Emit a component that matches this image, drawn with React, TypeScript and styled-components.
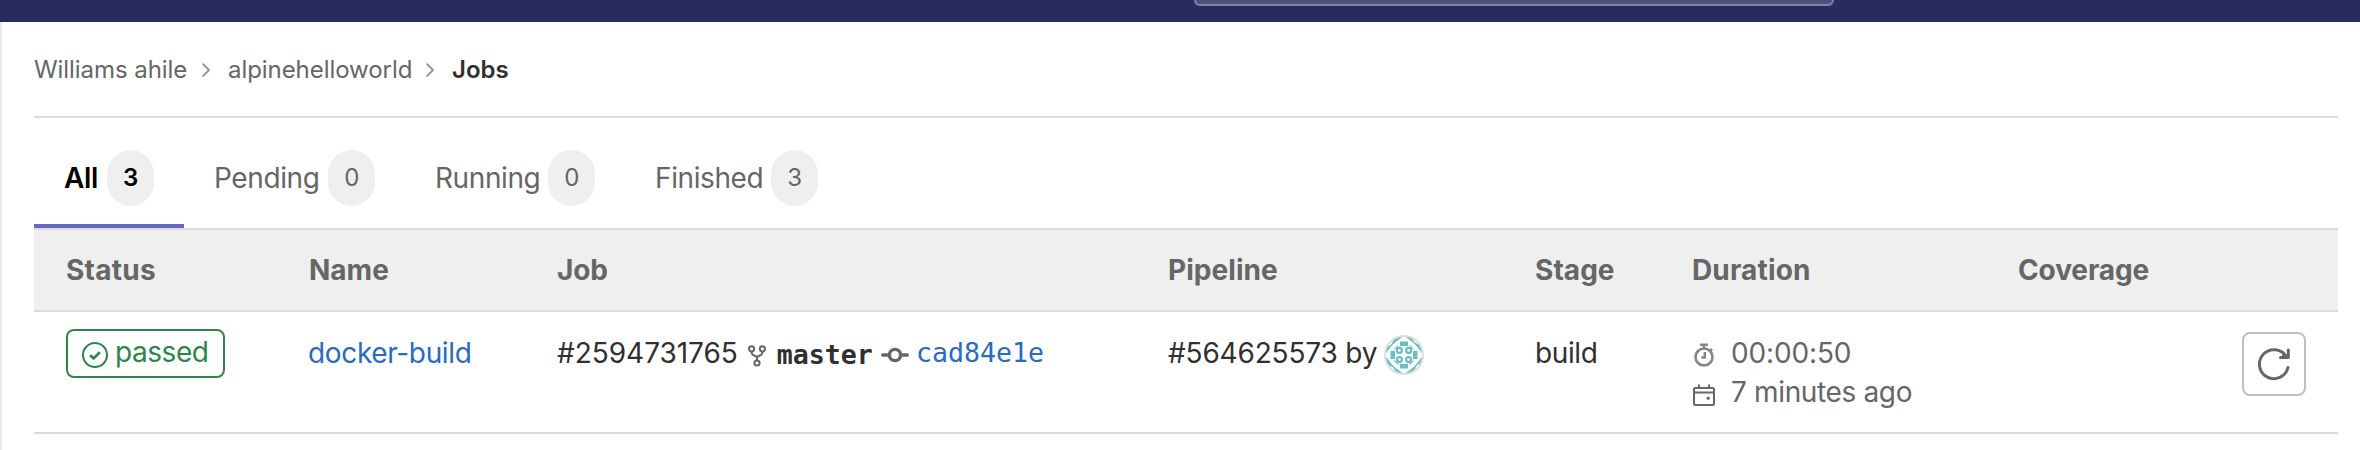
import React from 'react';
import styled, { createGlobalStyle } from 'styled-components';

const GlobalStyle = createGlobalStyle`
  *, *::before, *::after { box-sizing: border-box; }
  body {
    margin: 0;
    background: #fff;
    color: #303030;
    font-family: Inter, "Liberation Sans", sans-serif;
    font-size: 28px;
    line-height: 40px;
  }
`;

const Page = styled.div`
  height: 450px;
  display: flex;
  flex-direction: column;
  overflow: hidden;
`;

const TopBar = styled.header`
  height: 22px;
  flex: none;
  padding-left: 1194px;
  background: #282b5d;
  overflow: hidden;
`;

const SearchEdge = styled.div`
  width: 640px;
  height: 6px;
  background: #4e4f7b;
  border: 2px solid #8081a8;
  border-top: 0;
  border-radius: 0 0 8px 8px;
`;

const Content = styled.main`
  flex: 1;
  border-left: 2px solid #eaeaea;
  padding: 0 22px 0 32px;
`;

const Breadcrumbs = styled.nav`
  height: 96px;
  padding-top: 2px;
  border-bottom: 2px solid #dbdbdb;
  display: flex;
  align-items: center;
  font-size: 24px;
  color: #666;
`;

const Crumb = styled.span<{ $width: number }>`
  width: ${(p) => p.$width}px;
  letter-spacing: -0.06px;
  white-space: nowrap;
`;

const CurrentCrumb = styled.span`
  font-weight: 600;
  color: #303030;
`;

const Chevron = styled.svg`
  width: 8px;
  height: 14px;
  margin: 0 18px 0 14px;
  flex: none;
`;

const TabList = styled.div`
  display: flex;
  height: 112px;
  border-bottom: 2px solid #dbdbdb;
`;

const Tab = styled.div<{ $width: number; $active?: boolean }>`
  width: ${(p) => p.$width}px;
  height: 110px;
  padding: 14px 30px 0;
  display: flex;
  align-items: center;
  justify-content: space-between;
  letter-spacing: -0.4px;
  color: ${(p) => (p.$active ? '#000' : '#666')};
  font-weight: ${(p) => (p.$active ? 600 : 400)};
  border-bottom: 4px solid ${(p) => (p.$active ? '#6666c4' : 'transparent')};
`;

const Count = styled.span`
  width: 47px;
  height: 56px;
  border-radius: 24px;
  background: #efefef;
  display: flex;
  align-items: center;
  justify-content: center;
  font-size: 24px;
`;

const columns = '243px 248px 611px 367px 157px 326px 1fr';

const HeadRow = styled.div`
  display: grid;
  grid-template-columns: ${columns};
  height: 82px;
  padding: 20px 32px 0;
  background: #efefef;
  border-bottom: 2px solid #dbdbdb;
`;

const Heading = styled.span<{ $spacing: number }>`
  color: #666;
  font-weight: 700;
  letter-spacing: ${(p) => p.$spacing}px;
`;

const BodyRow = styled.div`
  display: grid;
  grid-template-columns: ${columns};
  height: 122px;
  padding: 17px 32px 0;
  border-bottom: 2px solid #dbdbdb;
`;

const Cell = styled.div`
  display: flex;
  align-items: flex-start;
  padding-top: 4px;
  white-space: nowrap;
`;

const StatusCell = styled(Cell)`
  padding-top: 0;
`;

const StatusBadge = styled.span`
  width: 159px;
  height: 49px;
  padding-left: 14px;
  display: flex;
  align-items: flex-start;
  gap: 7px;
  border: 2px solid #2f8549;
  border-radius: 8px;
  color: #2f8549;
  line-height: 43px;
`;

const Text = styled.span<{ $spacing?: number }>`
  letter-spacing: ${(p) => p.$spacing ?? -0.4}px;
`;

const Link = styled(Text)`
  color: #2a6ac0;
  margin-left: -1px;
`;

const Mono = styled.span<{ $strong?: boolean }>`
  font-family: "DejaVu Sans Mono", monospace;
  font-size: 26.6px;
  color: ${(p) => (p.$strong ? '#303030' : '#2a6ac0')};
  font-weight: ${(p) => (p.$strong ? 700 : 400)};
  padding-top: ${(p) => (p.$strong ? 2 : 0)}px;
`;

const Icon = styled.svg<{ $w: number; $h: number; $m?: string; $color?: string }>`
  flex: none;
  width: ${(p) => p.$w}px;
  height: ${(p) => p.$h}px;
  margin: ${(p) => p.$m ?? '0'};
  color: ${(p) => p.$color ?? '#666'};
`;

const TimeCell = styled(Cell)`
  flex-direction: column;
  color: #666;
`;

const TimeLine = styled.div`
  display: flex;
  align-items: flex-start;
  height: 39px;
`;

const ActionCell = styled(Cell)`
  padding-top: 3px;
`;

const RetryButton = styled.button`
  width: 64px;
  height: 64px;
  margin-left: auto;
  padding: 0;
  display: flex;
  align-items: center;
  justify-content: center;
  background: #fff;
  border: 2px solid #bfbfbf;
  border-radius: 8px;
`;

const Separator = () => (
  <Chevron viewBox="0 0 8 14" fill="none" stroke="#999" strokeWidth="2" strokeLinecap="round" strokeLinejoin="round">
    <path d="M1.2 1.2 7 7 1.2 12.8" />
  </Chevron>
);

const Avatar = () => (
  <Icon $w={40} $h={40} $m="2px 0 0 7px" viewBox="0 0 40 40">
    <clipPath id="avatar-clip"><circle cx="20" cy="20" r="19" /></clipPath>
    <g clipPath="url(#avatar-clip)">
      <rect width="40" height="40" fill="#fff" />
      <g fill="#6ebdc1">
        {[0, 90, 180, 270].map((a) => (
          <g key={a} transform={`rotate(${a} 20 20)`}>
            <path d="M11 1H19.5L11 7.5 7.5 11 1 19.5V11L6 10.5 8 8.5Z" />
            <path d="M16 6.5H24V11H16Z" />
            <path d="M10.5 13.5 13.5 10.5H15L10.5 15Z" />
            <circle cx="15.4" cy="15.4" r="2.5" fill="none" stroke="#6ebdc1" strokeWidth="2.2" />
          </g>
        ))}
      </g>
    </g>
    <circle cx="20" cy="20" r="19" fill="none" stroke="#dfdfdf" strokeWidth="2" />
  </Icon>
);

const tabs = [
  { label: 'All', count: 3, width: 150, active: true },
  { label: 'Pending', count: 0, width: 221 },
  { label: 'Running', count: 0, width: 220 },
  { label: 'Finished', count: 3, width: 223 },
];

const headings = [
  { label: 'Status', spacing: 0.25 },
  { label: 'Name', spacing: 0 },
  { label: 'Job', spacing: -0.1 },
  { label: 'Pipeline', spacing: 0.05 },
  { label: 'Stage', spacing: 0.05 },
  { label: 'Duration', spacing: 0.15 },
  { label: 'Coverage', spacing: -0.1 },
];

export default function App() {
  return (
    <>
      <GlobalStyle />
      <Page>
        <TopBar><SearchEdge /></TopBar>
        <Content>
          <Breadcrumbs>
            <Crumb $width={154}>Williams ahile</Crumb>
            <Separator />
            <Crumb $width={184}>alpinehelloworld</Crumb>
            <Separator />
            <CurrentCrumb>Jobs</CurrentCrumb>
          </Breadcrumbs>
          <TabList>
            {tabs.map((t) => (
              <Tab key={t.label} $width={t.width} $active={t.active}>
                {t.label}
                <Count>{t.count}</Count>
              </Tab>
            ))}
          </TabList>
          <HeadRow>
            {headings.map((h) => <Heading key={h.label} $spacing={h.spacing}>{h.label}</Heading>)}
          </HeadRow>
          <BodyRow>
            <StatusCell>
              <StatusBadge>
                <Icon $w={26} $h={26} $m="11px 0 0" $color="#2f8549" viewBox="0 0 26 26" fill="none" stroke="currentColor">
                  <circle cx="13" cy="13" r="12" strokeWidth="2" />
                  <path d="M8.2 13.2 11.6 16.4 17.8 10.2" strokeWidth="2.8" />
                </Icon>
                <Text $spacing={-0.45}>passed</Text>
              </StatusBadge>
            </StatusCell>
            <Cell><Link $spacing={-0.35}>docker-build</Link></Cell>
            <Cell>
              <Text $spacing={-0.03}>#2594731765</Text>
              <Icon $w={18} $h={22} $m="12px 11px 0 10px" viewBox="0 0 18 22" fill="none" stroke="currentColor" strokeWidth="2">
                <circle cx="3.6" cy="3.8" r="2.6" />
                <circle cx="14.4" cy="3.8" r="2.6" />
                <circle cx="9" cy="18" r="2.6" />
                <path d="M3.6 6.4V7.5Q3.6 9 5 9.8L9 12 13 9.8Q14.4 9 14.4 7.5V6.4M9 12V15.4" />
              </Icon>
              <Mono $strong>master</Mono>
              <Icon $w={28} $h={16} $m="14px 7px 0 8px" viewBox="0 0 28 16" fill="none" stroke="currentColor" strokeLinecap="round">
                <circle cx="14" cy="8" r="5.6" strokeWidth="3.4" />
                <path d="M1.8 8H8M20 8H26.2" strokeWidth="3.6" />
              </Icon>
              <Mono>cad84e1e</Mono>
            </Cell>
            <Cell><Text $spacing={-0.18}>#564625573 by</Text><Avatar /></Cell>
            <Cell><Text>build</Text></Cell>
            <TimeCell>
              <TimeLine>
                <Icon $w={24} $h={24} $m="10px 15px 0 0" $color="#868686" viewBox="0 0 24 24" fill="none" stroke="currentColor">
                  <circle cx="12" cy="14" r="8.5" strokeWidth="2.6" />
                  <path d="M8 1.8H16M12 2V6M12.8 9V14.5H9.3M18 6 20 8" strokeWidth="2.6" />
                </Icon>
                <Text $spacing={-0.15}>00:00:50</Text>
              </TimeLine>
              <TimeLine>
                <Icon $w={24} $h={24} $m="11px 15px 0 0" viewBox="0 0 24 24" fill="none" stroke="currentColor" strokeWidth="2">
                  <rect x="2" y="5" width="20" height="17" rx="1.5" />
                  <path d="M2 9.5H22M7 1.5V5M17 1.5V5" />
                  <circle cx="16.2" cy="15.2" r="1.6" fill="currentColor" stroke="none" />
                </Icon>
                <Text $spacing={-0.35}>7 minutes ago</Text>
              </TimeLine>
            </TimeCell>
            <ActionCell>
              <RetryButton aria-label="Retry">
                <Icon $w={32} $h={34} viewBox="0 0 32 34" fill="none" stroke="currentColor" strokeWidth="3" strokeLinecap="round" strokeLinejoin="round">
                  <path d="M30 20.5A14.5 14.5 0 1 1 28.5 10" />
                  <path d="M30.3 3V10.5H22.5M25.5 8.8 30 10" />
                </Icon>
              </RetryButton>
            </ActionCell>
          </BodyRow>
        </Content>
      </Page>
    </>
  );
}
